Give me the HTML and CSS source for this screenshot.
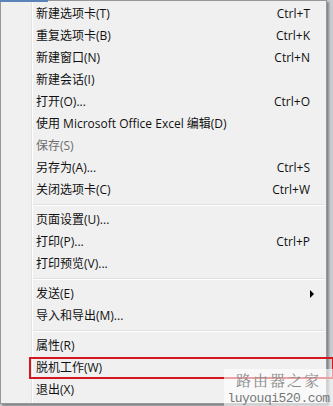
FILE: index.html
```html
<!DOCTYPE html>
<html>
<head>
<meta charset="utf-8">
<link rel="stylesheet" href="styles.css">
</head>
<body>
<div class="stage">
  <div class="topbar"></div>
  <div class="menu">
    <div class="item"><span class="label">新建选项卡(T)</span><span class="key">Ctrl+T</span></div>
    <div class="item"><span class="label">重复选项卡(B)</span><span class="key">Ctrl+K</span></div>
    <div class="item"><span class="label">新建窗口(N)</span><span class="key">Ctrl+N</span></div>
    <div class="item"><span class="label">新建会话(I)</span></div>
    <div class="item"><span class="label">打开(O)...</span><span class="key">Ctrl+O</span></div>
    <div class="item"><span class="label">使用 Microsoft Office Excel 编辑(D)</span></div>
    <div class="item disabled"><span class="label">保存(S)</span></div>
    <div class="item"><span class="label">另存为(A)...</span><span class="key">Ctrl+S</span></div>
    <div class="item"><span class="label">关闭选项卡(C)</span><span class="key">Ctrl+W</span></div>
    <div class="sep"></div>
    <div class="item"><span class="label">页面设置(U)...</span></div>
    <div class="item"><span class="label">打印(P)...</span><span class="key">Ctrl+P</span></div>
    <div class="item"><span class="label">打印预览(V)...</span></div>
    <div class="sep"></div>
    <div class="item"><span class="label">发送(E)</span><span class="key"><span class="arrow"></span></span></div>
    <div class="item"><span class="label">导入和导出(M)...</span></div>
    <div class="sep"></div>
    <div class="item"><span class="label">属性(R)</span></div>
    <div class="item highlight"><span class="label">脱机工作(W)</span></div>
    <div class="item"><span class="label">退出(X)</span></div>
  </div>
  <div class="watermark">
    <div class="wm-cn">路由器之家</div>
    <div class="wm-en">luyouqi520.com</div>
  </div>
</div>
</body>
</html>
```
FILE: styles.css
```css
html, body {
  margin: 0;
  padding: 0;
}
body {
  width: 333px;
  height: 406px;
  overflow: hidden;
  background: #6f7b88;
  font-family: "Open Sans", "Noto Sans CJK SC", sans-serif;
  font-size: 12px;
  color: #000;
}
.stage {
  position: relative;
  width: 333px;
  height: 406px;
  background: #c9cdd2;
}
.topbar {
  position: absolute;
  left: 0;
  top: 0;
  width: 48px;
  height: 2px;
  background: #5a84b8;
}
.menu {
  width: 325px;
  height: 398px;
  padding: 2px 0;
  border: 1px solid #979797;
  background:
    linear-gradient(#e2e3e3, #e2e3e3) 30px 0 / 1px 100% no-repeat,
    linear-gradient(#ffffff, #ffffff) 31px 0 / 1px 100% no-repeat,
    #f0f0f0;
  box-shadow: 2px 2px 2px rgba(0,0,0,0.35);
  color: #111;
}
.item {
  height: 22px;
  display: flex;
  align-items: center;
  padding-left: 35px;
  padding-right: 16px;
  line-height: 22px;
  white-space: nowrap;
}
.item .key {
  margin-left: auto;
  position: relative;
}
.item.disabled {
  color: #6d6d6d;
}
.item.highlight {
  position: relative;
}
.item.highlight::after {
  content: "";
  position: absolute;
  left: 28px;
  right: -8px;
  top: 0;
  bottom: 0;
  border: 2px solid #d4161e;
}
.arrow {
  display: inline-block;
  width: 0;
  height: 0;
  border-top: 4px solid transparent;
  border-bottom: 4px solid transparent;
  border-left: 4px solid #000;
  margin-right: -7px;
}
.sep {
  height: 8px;
  margin-left: 32px;
  margin-right: 1px;
  background:
    linear-gradient(#e0e0e0, #e0e0e0) 0 3px / 100% 1px no-repeat,
    linear-gradient(#ffffff, #ffffff) 0 4px / 100% 1px no-repeat;
}
.watermark {
  position: absolute;
  left: 224px;
  top: 369px;
  width: 109px;
  height: 37px;
  background: rgba(255,255,255,0.6);
  display: flex;
  flex-direction: column;
  align-items: center;
}
.wm-cn {
  font-family: "Noto Serif CJK SC", "Noto Sans CJK SC", serif;
  font-size: 15px;
  line-height: 22px;
  height: 22px;
  color: #8a8a8a;
  letter-spacing: 2px;
}
.wm-en {
  font-family: "Liberation Mono", monospace;
  font-size: 13px;
  line-height: 15px;
  height: 15px;
  color: #777;
  letter-spacing: -0.5px;
}
```
